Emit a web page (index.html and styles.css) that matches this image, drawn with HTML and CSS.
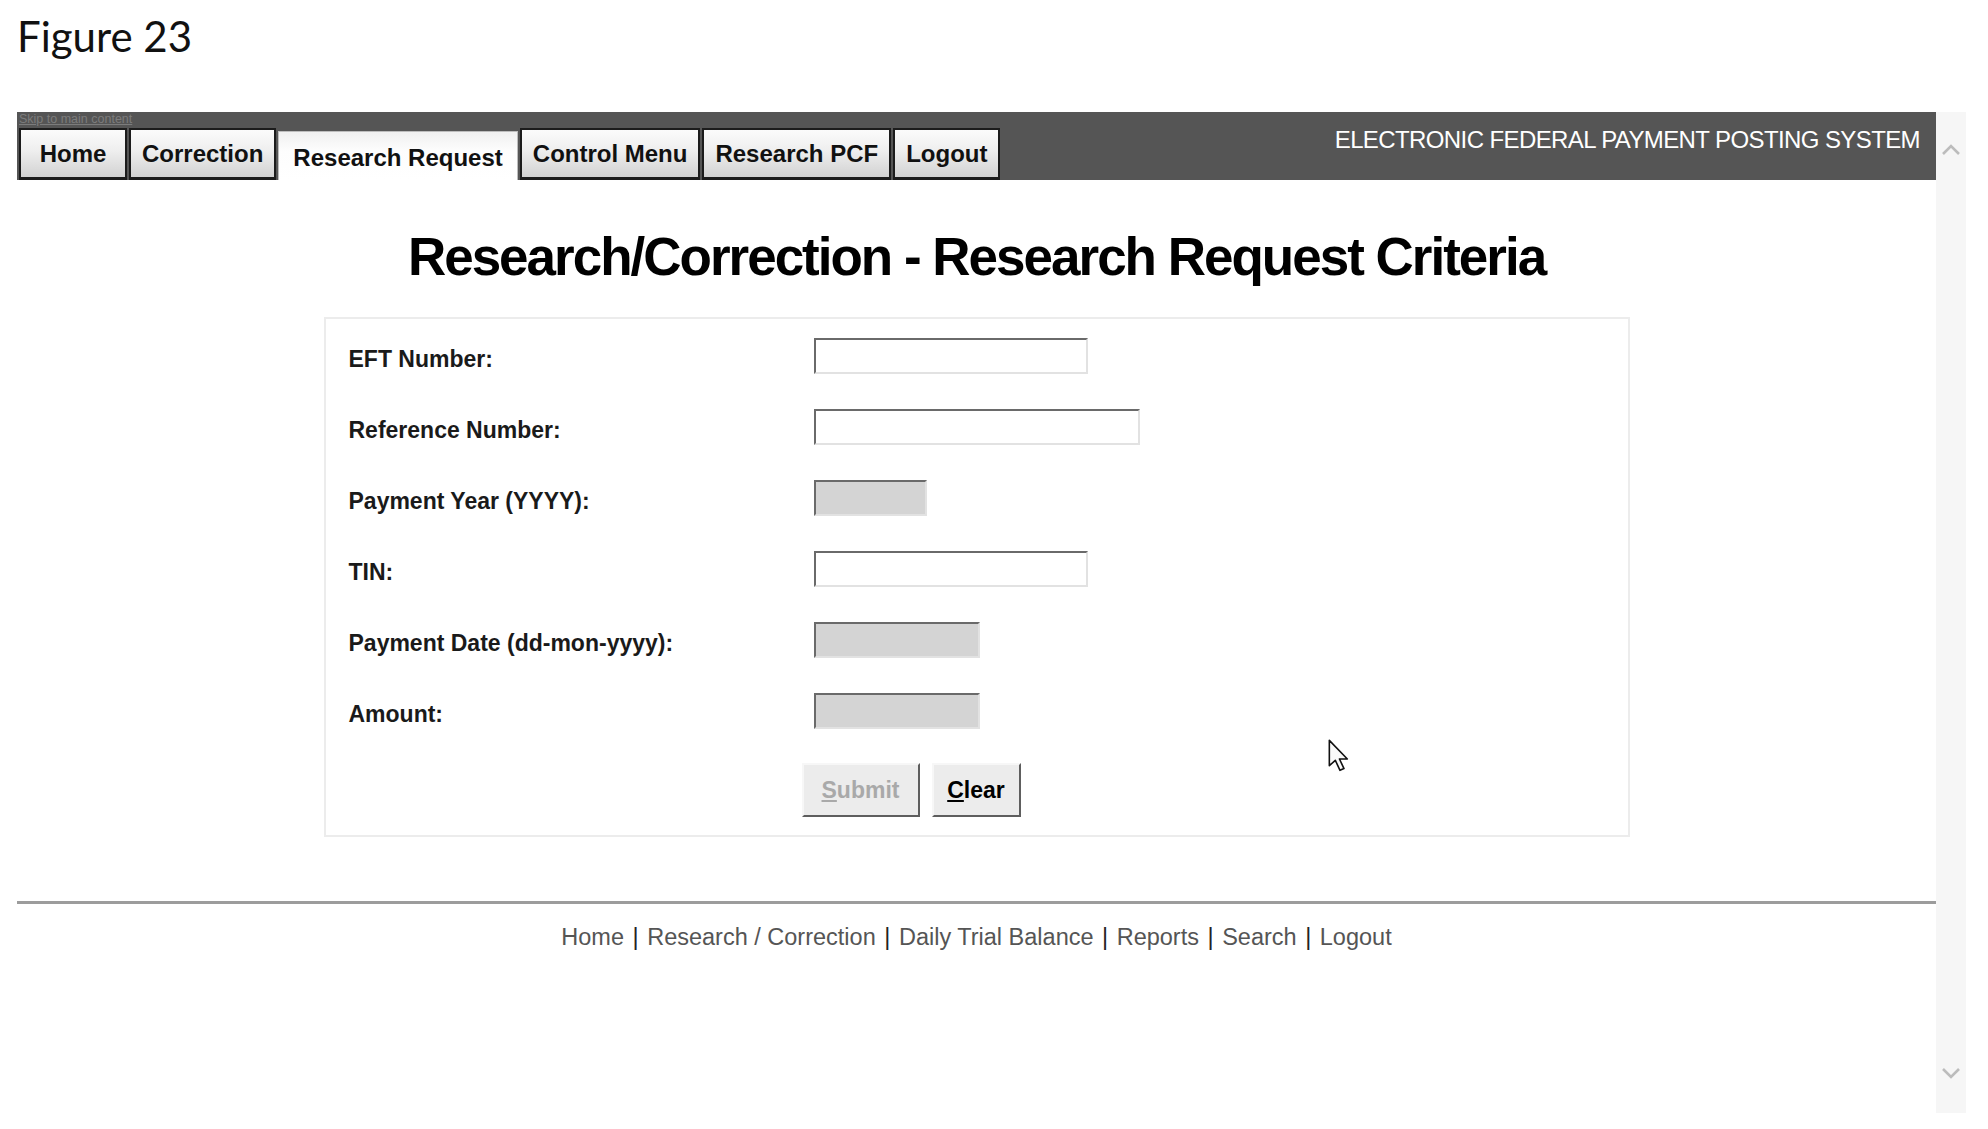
FILE: index.html
```html
<!DOCTYPE html>
<html lang="en">
<head>
    <meta charset="UTF-8">
    <meta name="viewport" content="width=device-width, initial-scale=1.0">
    <title>Research Request Criteria</title>
    <link rel="stylesheet" href="styles.css">
</head>
<body>
    <div class="caption">Figure 23</div>

    <div class="frame">
        <div class="window">
            <div class="navbar">
                <div class="nav-left">
                    <a class="skip" href="#main">Skip to main content</a>
                    <div class="tabs">
                        <a class="tab tab-home" href="#">Home</a>
                        <a class="tab" href="#">Correction</a>
                        <a class="tab active" href="#">Research Request</a>
                        <a class="tab" href="#">Control Menu</a>
                        <a class="tab" href="#">Research PCF</a>
                        <a class="tab tab-logout" href="#">Logout</a>
                    </div>
                </div>
                <div class="system-name">ELECTRONIC FEDERAL PAYMENT POSTING SYSTEM</div>
            </div>

            <h1 class="title" id="main">Research/Correction - Research Request Criteria</h1>

            <form class="criteria-box">
                <div class="criteria">
                    <label class="label" for="eft">EFT Number:</label>
                    <input class="field w-eft" id="eft" type="text">

                    <label class="label" for="ref">Reference Number:</label>
                    <input class="field w-ref" id="ref" type="text">

                    <label class="label" for="year">Payment Year (YYYY):</label>
                    <input class="field w-year disabled" id="year" type="text" disabled>

                    <label class="label" for="tin">TIN:</label>
                    <input class="field w-eft" id="tin" type="text">

                    <label class="label" for="pdate">Payment Date (dd-mon-yyyy):</label>
                    <input class="field w-date disabled" id="pdate" type="text" disabled>

                    <label class="label" for="amount">Amount:</label>
                    <input class="field w-date disabled" id="amount" type="text" disabled>
                </div>
                <div class="actions">
                    <button class="btn btn-submit" type="button" disabled><u>S</u>ubmit</button>
                    <button class="btn btn-clear" type="reset"><u>C</u>lear</button>
                </div>
            </form>

            <hr class="divider">

            <div class="footer">
                <a href="#">Home</a> <span class="sep">|</span>
                <a href="#">Research / Correction</a> <span class="sep">|</span>
                <a href="#">Daily Trial Balance</a> <span class="sep">|</span>
                <a href="#">Reports</a> <span class="sep">|</span>
                <a href="#">Search</a> <span class="sep">|</span>
                <a href="#">Logout</a>
            </div>

            <svg class="cursor" width="24" height="36" viewBox="0 0 18 27">
                <path d="M1 1 L1 20 L5.5 16 L9 23.5 L12 22.2 L8.6 15 L14.5 15 Z" fill="#fafafa" stroke="#111" stroke-width="1.2" stroke-linejoin="round"/>
            </svg>
        </div>

        <div class="scrollbar">
            <svg width="20" height="13" viewBox="0 0 20 13"><path d="M2 11 L10 3 L18 11" fill="none" stroke="#bcbcbc" stroke-width="2.6"/></svg>
            <svg width="20" height="13" viewBox="0 0 20 13"><path d="M2 2 L10 10 L18 2" fill="none" stroke="#bcbcbc" stroke-width="2.6"/></svg>
        </div>
    </div>
</body>
</html>
```

FILE: styles.css
```css
body {
    margin: 0;
    background-color: #fff;
    font-family: "Liberation Sans", Arial, sans-serif;
    color: #111;
}

.caption {
    font-family: Lato, "Open Sans", sans-serif;
    font-size: 42px;
    line-height: 50px;
    color: #111;
    padding: 11px 0 0 17px;
    height: 51px;
}

.frame {
    display: flex;
    margin-left: 17px;
    margin-top: 50px;
    height: 1001px;
}

.window {
    width: 1919px;
    position: relative;
}

.scrollbar {
    width: 30px;
    background-color: #f6f6f6;
    display: flex;
    flex-direction: column;
    justify-content: space-between;
    align-items: center;
    padding: 31px 0 33px;
    box-sizing: border-box;
}

/* top bar */
.navbar {
    background-color: #555;
    height: 68px;
    display: flex;
    justify-content: space-between;
}

.nav-left {
    display: flex;
    flex-direction: column;
    padding-left: 2px;
}

.skip {
    font-size: 12.5px;
    line-height: 14px;
    color: #7c7c7c;
    height: 14px;
}

.tabs {
    display: flex;
    align-items: flex-end;
    gap: 2px;
    margin-top: 1px;
    height: 53px;
}

.tab {
    min-width: 104px;
    height: 52px;
    box-sizing: border-box;
    padding: 0 11px;
    display: flex;
    align-items: center;
    justify-content: center;
    font-size: 24px;
    font-weight: bold;
    color: #111;
    text-decoration: none;
    border: 2px solid #1c1c1c;
    border-bottom-width: 3px;
    background: linear-gradient(#fbfbfb, #eeeeee 45%, #d2d2d2);
}

.tab-home {
    min-width: 108px;
}

.tab-logout {
    min-width: 102px;
}

.tab.active {
    height: 49px;
    padding: 4px 14px 0;
    border: 1px solid #bdbdbd;
    border-bottom: none;
    background: linear-gradient(#f0f0f0, #fdfdfd 40%, #ffffff);
}

.system-name {
    color: #fff;
    font-size: 24px;
    letter-spacing: -0.6px;
    line-height: 28px;
    margin-top: 14px;
    padding-right: 16px;
}

/* page heading */
.title {
    margin: 45px 0 0;
    text-align: center;
    font-size: 53px;
    line-height: 64px;
    letter-spacing: -2px;
    font-weight: bold;
    color: #000;
}

/* criteria form */
.criteria-box {
    width: 1306px;
    box-sizing: border-box;
    margin: 28px auto 0;
    border: 2px solid #ececec;
    padding: 19px 0 18px 23px;
}

.criteria {
    display: grid;
    grid-template-columns: 465px auto;
    row-gap: 35px;
    align-items: center;
    justify-items: start;
}

.label {
    font-size: 23px;
    font-weight: bold;
    color: #1a1a1a;
    padding-top: 6px;
}

.field {
    height: 36px;
    box-sizing: border-box;
    border: 2px solid;
    border-color: #6a6a6a #e2e2e2 #e2e2e2 #6a6a6a;
    background-color: #fff;
    margin: 0;
    padding: 0 4px;
    font-size: 20px;
}

.field.disabled {
    background-color: #d4d4d4;
}

.w-eft { width: 274px; }
.w-ref { width: 326px; }
.w-year { width: 113px; }
.w-date { width: 166px; }

.actions {
    display: flex;
    gap: 12px;
    margin-top: 34px;
    padding-left: 453px;
}

.btn {
    height: 54px;
    box-sizing: border-box;
    border: 2px solid;
    border-color: #f7f7f7 #5e5e5e #5e5e5e #f7f7f7;
    background-color: #ececec;
    font-family: "Liberation Sans", Arial, sans-serif;
    font-size: 23px;
    font-weight: bold;
    color: #000;
    padding: 0;
}

.btn-submit {
    width: 118px;
    color: #a9a9a9;
}

.btn-clear {
    width: 89px;
}

/* footer */
.divider {
    margin: 64px 0 0;
    border: none;
    height: 3px;
    background-color: #9c9c9c;
}

.footer {
    margin-top: 19px;
    text-align: center;
    font-size: 23.5px;
    line-height: 28px;
    color: #222;
}

.footer a {
    color: #555;
    text-decoration: none;
}

.sep {
    margin: 0 2px;
}

.cursor {
    position: absolute;
    left: 1311px;
    top: 627px;
}
```
